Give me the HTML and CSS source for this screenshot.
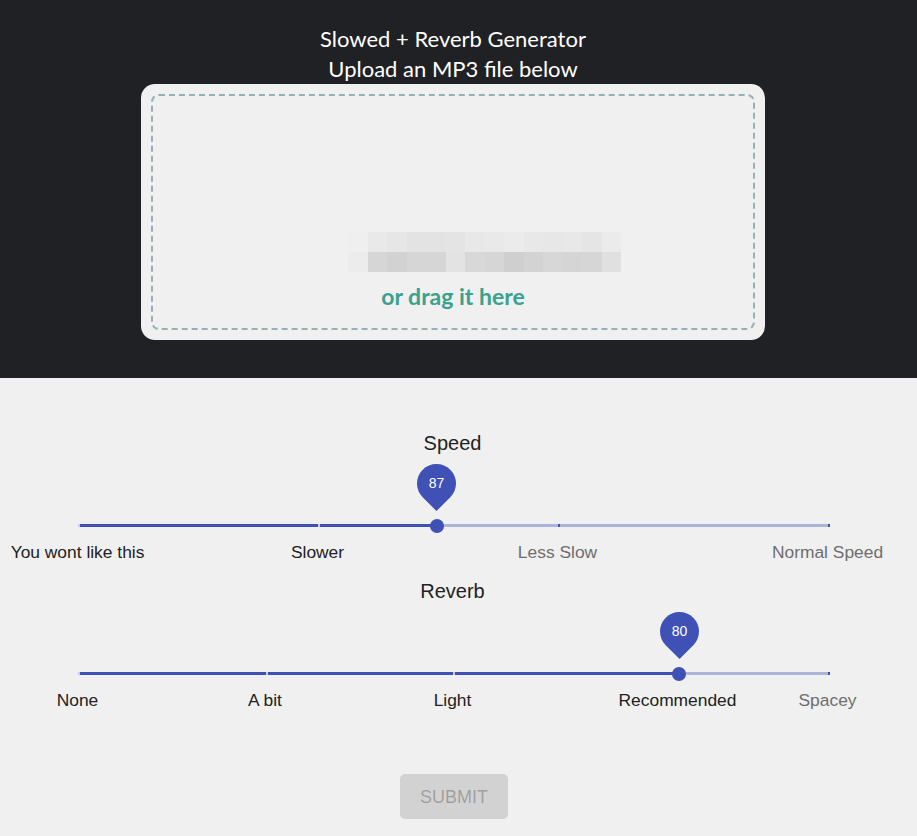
FILE: index.html
```html
<!DOCTYPE html>
<html lang="en">
<head>
  <meta charset="UTF-8" />
  <meta name="viewport" content="width=device-width, initial-scale=1.0" />
  <title>Slowed + Reverb Generator</title>
  <link rel="stylesheet" href="styles.css">
</head>
<body>
  <header class="top">
    <div class="page top-inner">
      <h1 class="title">Slowed + Reverb Generator<br>Upload an MP3 file below</h1>
      <div class="dropzone">
        <div class="dropzone-inner">
          <div class="blurred">
            <span style="background:#efefef"></span><span style="background:#e9e9e9"></span><span style="background:#e6e6e6"></span><span style="background:#e3e3e3"></span><span style="background:#e3e3e3"></span><span style="background:#e4e4e4"></span><span style="background:#e8e8e8"></span><span style="background:#e9e9e9"></span><span style="background:#ebebeb"></span><span style="background:#e8e8e8"></span><span style="background:#e7e7e7"></span><span style="background:#e8e8e8"></span><span style="background:#e5e5e5"></span><span style="background:#ebebeb"></span>
            <span style="background:#ececec"></span><span style="background:#d6d6d6"></span><span style="background:#d2d2d2"></span><span style="background:#d6d6d6"></span><span style="background:#d6d6d6"></span><span style="background:#e3e3e3"></span><span style="background:#d8d8d8"></span><span style="background:#d6d6d6"></span><span style="background:#cfcfcf"></span><span style="background:#d3d3d3"></span><span style="background:#d7d7d7"></span><span style="background:#d5d5d5"></span><span style="background:#d6d6d6"></span><span style="background:#e0e0e0"></span>
          </div>
          <p class="drag">or drag it here</p>
        </div>
      </div>
    </div>
  </header>

  <main class="page controls">
    <div class="slider-title">Speed</div>
    <div class="slider">
      <div class="rail">
        <div class="track" style="width:47.7%"></div>
        <span class="mark on" style="left:0%"></span>
        <span class="mark on" style="left:32%"></span>
        <span class="mark" style="left:64%"></span>
        <span class="mark" style="left:100%"></span>
        <span class="mlabel on" style="left:0%">You wont like this</span>
        <span class="mlabel on" style="left:32%">Slower</span>
        <span class="mlabel" style="left:64%">Less Slow</span>
        <span class="mlabel" style="left:100%">Normal Speed</span>
        <span class="thumb" style="left:47.7%"><span class="bubble"><span>87</span></span></span>
      </div>
    </div>

    <div class="slider-title">Reverb</div>
    <div class="slider">
      <div class="rail">
        <div class="track" style="width:80%"></div>
        <span class="mark on" style="left:0%"></span>
        <span class="mark on" style="left:25%"></span>
        <span class="mark on" style="left:50%"></span>
        <span class="mark" style="left:100%"></span>
        <span class="mlabel on" style="left:0%">None</span>
        <span class="mlabel on" style="left:25%">A bit</span>
        <span class="mlabel on" style="left:50%">Light</span>
        <span class="mlabel on" style="left:80%">Recommended</span>
        <span class="mlabel" style="left:100%">Spacey</span>
        <span class="thumb" style="left:80%"><span class="bubble"><span>80</span></span></span>
      </div>
    </div>

    <div class="submit-row">
      <button type="button" class="submit" disabled>Submit</button>
    </div>
  </main>
</body>
</html>
```

FILE: styles.css
```css
body {
  margin: 0;
  background: #f0f0f0;
  font-family: "Liberation Sans", Arial, sans-serif;
}
.page {
  width: 906px;
  box-sizing: border-box;
}
.top {
  background: #202124;
  height: 378px;
}
.top-inner {
  padding-top: 24px;
  display: flex;
  flex-direction: column;
  align-items: center;
}
.title {
  margin: 0;
  font-family: Lato, "Open Sans", sans-serif;
  font-weight: normal;
  font-size: 22px;
  line-height: 30px;
  color: #fff;
  text-align: center;
}
.dropzone {
  width: 624px;
  height: 256px;
  padding: 10px;
  box-sizing: border-box;
  background: #f0f0f0;
  border-radius: 14px;
}
.dropzone-inner {
  height: 100%;
  box-sizing: border-box;
  border: 2px dashed #94b2b5;
  border-radius: 8px;
  display: flex;
  flex-direction: column;
  align-items: center;
  justify-content: flex-end;
  padding-bottom: 19px;
}
.blurred {
  display: grid;
  grid-template-columns: repeat(14, 1fr);
  grid-template-rows: 20px 20px;
  width: 273px;
  margin-left: 63px;
  margin-bottom: 11px;
}
.drag {
  margin: 0;
  font-family: Lato, "Open Sans", sans-serif;
  font-weight: bold;
  font-size: 23px;
  line-height: 26px;
  color: #3aa18f;
}
.controls {
  padding: 53px 77px 0 79px;
}
.slider-title {
  text-align: center;
  font-size: 20px;
  line-height: 24px;
  color: #222;
  padding-right: 3px;
}
.slider {
  height: 124px;
  padding-top: 69px;
  box-sizing: border-box;
}
.rail {
  position: relative;
  height: 3px;
  background: #adb4da;
}
.track {
  height: 100%;
  background: #3f51b5;
}
.mark {
  position: absolute;
  top: 0;
  width: 2px;
  height: 3px;
  margin-left: -1px;
  background: #3f51b5;
}
.mark.on {
  background: #c9cde8;
}
.mlabel {
  position: absolute;
  top: 18px;
  margin-left: -1.5px;
  transform: translateX(-50%);
  white-space: nowrap;
  font-size: 17.4px;
  line-height: 20px;
  color: #6e6e6e;
}
.mlabel.on {
  color: #222;
}
.thumb {
  position: absolute;
  top: 1.5px;
  width: 14px;
  height: 14px;
  margin: -7px 0 0 -7px;
  border-radius: 50%;
  background: #3f51b5;
}
.bubble {
  position: absolute;
  left: -12.5px;
  top: -54.5px;
  width: 39px;
  height: 39px;
  border-radius: 50% 50% 50% 0;
  background: #3f51b5;
  transform: rotate(-45deg);
}
.bubble span {
  display: block;
  transform: rotate(45deg);
  text-align: center;
  line-height: 39px;
  font-size: 14px;
  color: #fff;
}
.submit-row {
  text-align: center;
  margin-top: 47px;
}
.submit {
  padding: 12px 20px 10px;
  border: none;
  border-radius: 5px;
  background: rgba(0,0,0,0.12);
  color: rgba(0,0,0,0.26);
  font-family: "Liberation Sans", Arial, sans-serif;
  font-size: 18px;
  line-height: 23px;
  text-transform: uppercase;
}
```
